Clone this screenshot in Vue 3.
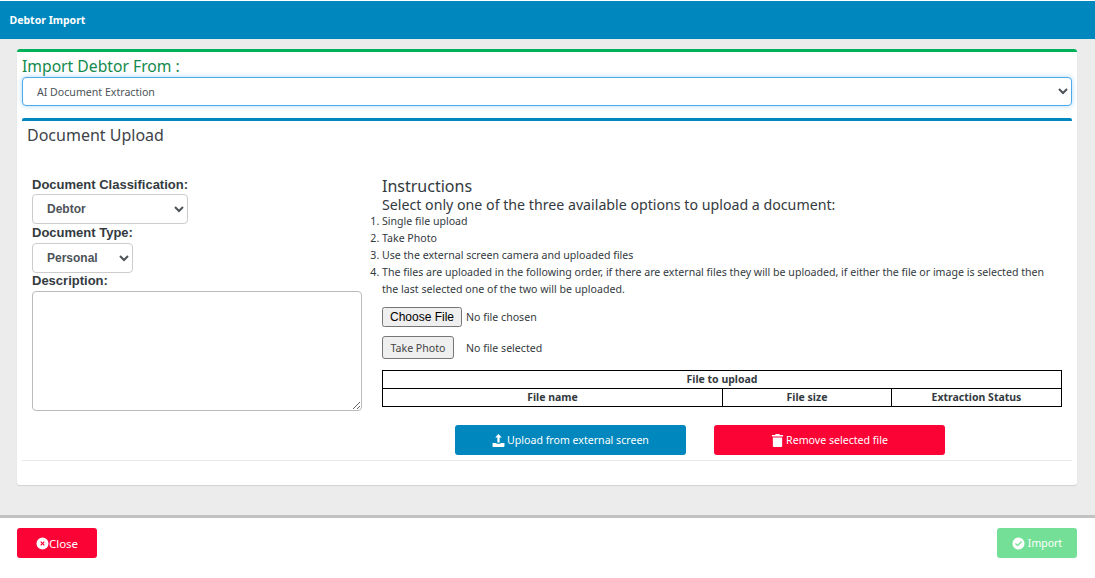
<script setup>
const steps = [
  'Single file upload',
  'Take Photo',
  'Use the external screen camera and uploaded files',
  'The files are uploaded in the following order, if there are external files they will be uploaded, if either the file or image is selected then the last selected one of the two will be uploaded.'
]
</script>

<template>
  <div class="page">
    <header class="topbar">Debtor Import</header>
    <main class="content">
      <section class="card">
        <h2 class="import-title">Import Debtor From :</h2>
        <select class="source-select">
          <option>AI Document Extraction</option>
        </select>
        <section class="upload">
          <h3 class="upload-title">Document Upload</h3>
          <div class="columns">
            <div class="left">
              <label class="field-label">Document Classification:</label>
              <select class="small-select classification"><option>Debtor</option></select>
              <label class="field-label">Document Type:</label>
              <select class="small-select doctype"><option>Personal</option></select>
              <label class="field-label">Description:</label>
              <textarea class="description"></textarea>
            </div>
            <div class="right">
              <div class="ins-title">Instructions</div>
              <div class="ins-sub">Select only one of the three available options to upload a document:</div>
              <ol class="steps">
                <li v-for="s in steps" :key="s">{{ s }}</li>
              </ol>
              <input class="file" type="file" />
              <div class="photo-row">
                <button class="photo-btn" type="button">Take Photo</button>
                <span>No file selected</span>
              </div>
              <table class="files">
                <colgroup>
                  <col class="c1" />
                  <col class="c2" />
                  <col />
                </colgroup>
                <thead>
                  <tr><th colspan="3">File to upload</th></tr>
                  <tr>
                    <th>File name</th>
                    <th>File size</th>
                    <th>Extraction Status</th>
                  </tr>
                </thead>
              </table>
              <div class="actions">
                <button class="btn blue" type="button">
                  <svg class="ico" viewBox="0 0 14 14"><path fill="currentColor" d="M7 0 10.6 3.800H8.200V9.200H5.800V3.800H3.400ZM.6 9.600H4.800V10.400H9.200V9.600H13.400V13.200Q13.400 14 12.600 14H1.400Q.6 14 .6 13.200Z"/></svg>Upload from external screen
                </button>
                <button class="btn red" type="button">
                  <svg class="ico" viewBox="0 0 14 14"><path fill="currentColor" d="M5 0H9L9.600 1H13V2.800H1V1H4.400ZM2 3.800H12V13Q12 14 11 14H3Q2 14 2 13Z"/></svg>Remove selected file
                </button>
              </div>
            </div>
          </div>
          <hr class="rule" />
        </section>
      </section>
    </main>
    <footer class="footer">
      <button class="btn red foot" type="button">
        <svg class="ico close-ico" viewBox="0 0 14 14"><path fill="currentColor" fill-rule="evenodd" d="M7 .5a6.500 6.500 0 1 1 0 13 6.500 6.500 0 0 1 0-13ZM5.500 4.600 4.600 5.500 6.100 7 4.600 8.500 5.500 9.400 7 7.900 8.500 9.400 9.400 8.500 7.900 7 9.400 5.500 8.500 4.600 7 6.100Z"/></svg><span class="close-text">Close</span>
      </button>
      <button class="btn green foot" type="button">
        <svg class="ico gap" viewBox="0 0 14 14"><path fill="currentColor" fill-rule="evenodd" d="M7 .5a6.500 6.500 0 1 1 0 13 6.500 6.500 0 0 1 0-13ZM10 4.300 6 8.300 4.200 6.500 3.200 7.500 6 10.300 11 5.300Z"/></svg>Import
      </button>
    </footer>
  </div>
</template>

<style scoped>
.page {
  width: 1095px;
  height: 578px;
  display: flex;
  flex-direction: column;
  background: #fff;
  overflow: hidden;
  font-family: "Noto Sans", sans-serif;
  color: #333a40;
}
.topbar {
  margin-top: 1px;
  height: 38px;
  flex: none;
  display: flex;
  align-items: center;
  padding-left: 9.500px;
  background: #0088be;
  color: #fff;
  font-size: 10.500px;
  font-weight: 700;
}
.content {
  flex: 1;
  background: #ececec;
  padding: 10px 18px 0 17px;
}
.card {
  height: 436px;
  box-sizing: border-box;
  background: #fff;
  border-top: 3px solid #00b159;
  border-radius: 3px;
  padding: 0 5px;
  box-shadow: 0 1px 1px rgba(0, 0, 0, .12);
}
.import-title {
  margin: 0;
  height: 26px;
  font-size: 15.700px;
  line-height: 28px;
  font-weight: 400;
  color: #138a4d;
}
.source-select {
  display: block;
  width: 100%;
  height: 29px;
  box-sizing: border-box;
  margin-top: -1px;
  padding: 1px 10px 0;
  background: #fff;
  border: 1px solid #4ba9ec;
  border-radius: 4px;
  box-shadow: 0 0 5px rgba(75, 169, 236, .45);
  color: #4d5358;
  font-family: inherit;
  font-size: 10.600px;
  outline: none;
}
.upload {
  margin-top: 12px;
  border-top: 3px solid #0088be;
  border-radius: 2px;
}
.upload-title {
  margin: 0;
  padding-left: 5px;
  height: 50px;
  font-size: 16px;
  line-height: 28px;
  font-weight: 400;
  color: #3d4348;
}
.columns {
  display: flex;
  gap: 20px;
  padding-left: 10px;
}
.left {
  width: 330px;
  flex: none;
  padding-top: 6px;
}
.field-label {
  display: block;
  height: 16px;
  line-height: 16px;
  font-family: "Liberation Sans", sans-serif;
  font-size: 13px;
  font-weight: 700;
}
.small-select {
  display: block;
  height: 30px;
  box-sizing: border-box;
  padding: 0 10px;
  background: #fff;
  border: 1px solid #ccc;
  border-radius: 4px;
  color: #4d5358;
  font-family: "Liberation Sans", sans-serif;
  font-size: 12px;
  font-weight: 700;
}
.classification { width: 156px; margin: 1px 0 1px; }
.doctype { width: 101px; margin: 2px 0 0; }
.description {
  display: block;
  width: 330px;
  height: 120px;
  box-sizing: border-box;
  margin-top: 2px;
  border: 1px solid #bbb;
  border-radius: 4px;
  background: #fff;
}
.right {
  width: 680px;
  flex: none;
  font-size: 10.600px;
}
.ins-title {
  font-size: 16px;
  line-height: 19px;
  margin-top: 6px;
}
.ins-sub {
  font-size: 14.200px;
  line-height: 18px;
}
.steps {
  margin: -1px 0 0;
  padding: 0;
  list-style-position: outside;
  line-height: 17px;
}
.file {
  display: block;
  margin-top: 9px;
  height: 21px;
  font-family: inherit;
  font-size: 10.600px;
  color: #333a40;
}
.file::file-selector-button {
  font-family: "Liberation Sans", sans-serif;
  font-size: 12px;
  height: 20px;
  width: 80px;
  padding: 0;
  margin-right: 4px;
}
.photo-row {
  display: flex;
  align-items: center;
  gap: 12px;
  margin-top: 8px;
  height: 23px;
}
.photo-btn {
  width: 72px;
  height: 23px;
  padding: 0;
  background: #efefef;
  border: 1px solid #767676;
  border-radius: 3px;
  color: #444;
  font-family: inherit;
  font-size: 10.600px;
}
.files {
  width: 680px;
  margin-top: 11px;
  border-collapse: collapse;
  table-layout: fixed;
}
.files th {
  border: 1px solid #000;
  height: 17px;
  padding: 0;
  font-size: 10.500px;
  line-height: 17px;
  font-weight: 700;
}
.c1 { width: 340px; }
.c2 { width: 169px; }
.actions {
  display: flex;
  justify-content: center;
  gap: 28px;
  margin-top: 18px;
  padding-right: 44px;
}
.btn {
  display: inline-flex;
  align-items: center;
  justify-content: center;
  height: 30px;
  padding: 0;
  border: 0;
  border-radius: 3px;
  color: #fff;
  font-family: inherit;
  font-size: 10.500px;
}
.actions .btn { width: 231px; font-size: 10.600px; }
.blue { background: #0088be; }
.red { background: #fb0335; }
.green { background: #74df97; }
.ico {
  width: 13px;
  height: 13px;
  margin-right: 2px;
  flex: none;
}
.close-ico { margin-right: 0; }
.close-text { font-size: 11.500px; }
.rule {
  margin: 5px 0 0;
  border: 0;
  border-top: 1px solid #e9e9e9;
}
.footer {
  flex: none;
  height: 50px;
  display: flex;
  justify-content: space-between;
  align-items: flex-start;
  padding: 10px 18px 0 17px;
  border-top: 3px solid #c2c2c2;
  background: #fff;
}
.foot { width: 80px; }
.gap { margin-right: 3px; }
</style>
